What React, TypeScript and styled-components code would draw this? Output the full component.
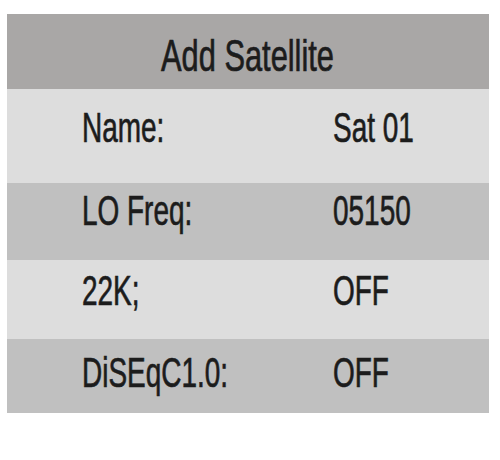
import React from 'react';
import styled, { createGlobalStyle } from 'styled-components';

const GlobalStyle = createGlobalStyle`
  html, body {
    margin: 0;
    padding: 0;
    background: #ffffff;
  }
  body {
    font-family: 'Liberation Sans', Arial, sans-serif;
    color: #1c1c1c;
  }
`;

const Page = styled.div`
  width: 500px;
  height: 460px;
  padding: 14px 11px 0 7px;
  box-sizing: border-box;
`;

const Panel = styled.div`
  width: 482px;
  display: flex;
  flex-direction: column;
`;

const Header = styled.div`
  height: 75px;
  background: #a9a7a6;
  display: flex;
  justify-content: center;
  align-items: flex-start;
  padding-top: 20px;
  box-sizing: border-box;
`;

const Title = styled.span`
  display: inline-block;
  font-size: 44px;
  line-height: 44px;
  transform: scaleX(0.7);
  transform-origin: center top;
  white-space: nowrap;
  -webkit-text-stroke: 0.7px #1c1c1c;
`;

const Row = styled.div<{ $h: number; $pad: number; $dark?: boolean }>`
  height: ${p => p.$h}px;
  padding-top: ${p => p.$pad}px;
  box-sizing: border-box;
  background: ${p => (p.$dark ? '#c0c0c0' : '#dddddd')};
  display: grid;
  grid-template-columns: 251px 1fr;
  padding-left: 75px;
`;

const Cell = styled.span`
  display: block;
  font-size: 43px;
  line-height: 43px;
  white-space: nowrap;
  transform: scaleX(0.65);
  transform-origin: left top;
  -webkit-text-stroke: 0.7px #1c1c1c;
`;

type Item = { label: string; value: string; h: number; pad: number; dark?: boolean };

const items: Item[] = [
  { label: 'Name:', value: 'Sat 01', h: 94, pad: 17 },
  { label: 'LO Freq:', value: '05150', h: 77, pad: 6, dark: true },
  { label: '22K;', value: 'OFF', h: 79, pad: 9 },
  { label: 'DiSEqC1.0:', value: 'OFF', h: 74, pad: 12, dark: true },
];

export default function App() {
  return (
    <Page>
      <GlobalStyle />
      <Panel>
        <Header>
          <Title>Add Satellite</Title>
        </Header>
        {items.map(it => (
          <Row key={it.label} $h={it.h} $pad={it.pad} $dark={it.dark}>
            <Cell>{it.label}</Cell>
            <Cell>{it.value}</Cell>
          </Row>
        ))}
      </Panel>
    </Page>
  );
}
